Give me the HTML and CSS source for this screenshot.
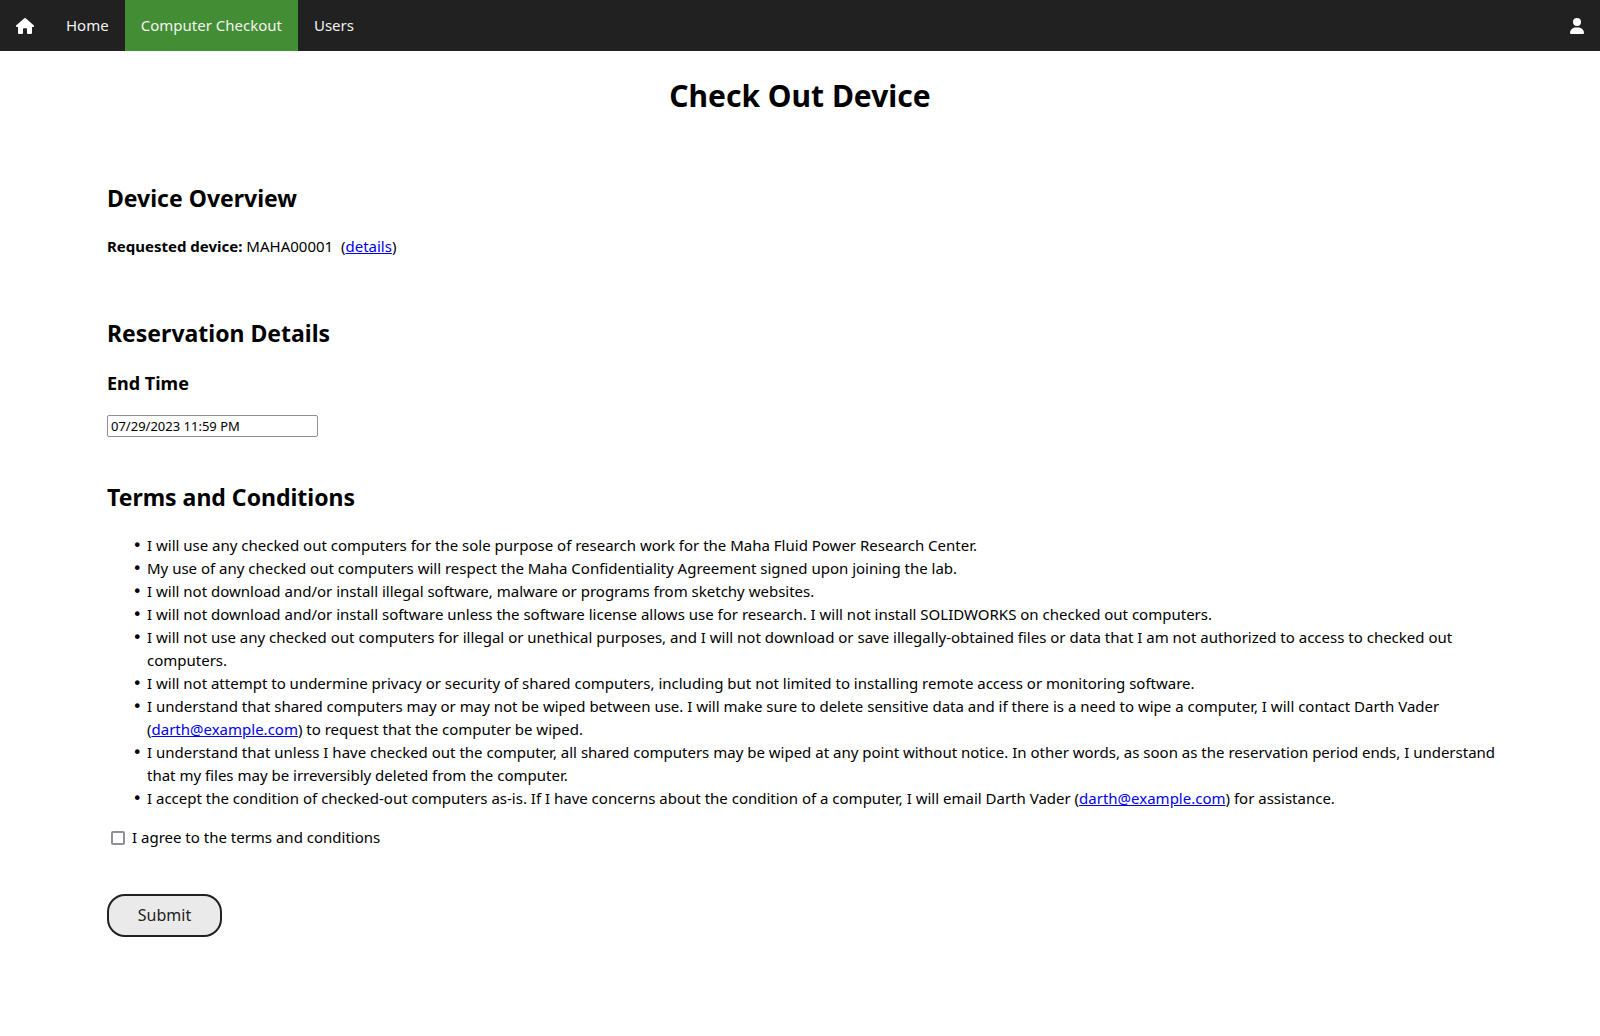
FILE: index.html
```html
<!DOCTYPE html>
<html lang="en">
<head>
  <meta charset="utf-8">
  <meta name="viewport" content="width=device-width, initial-scale=1">
  <title>Check Out Device</title>
  <link rel="stylesheet" href="styles.css">
</head>
<body>
  <nav class="navbar" aria-label="Main">
    <a class="nav-link" href="#" aria-label="Start page">
      <svg class="icon-home" viewBox="0 0 576 512" aria-hidden="true"><path d="M575.8 255.500c0 18-15 32.100-32 32.100h-32l.7 160.200c0 2.700-.2 5.400-.5 8.100V472c0 22.100-17.900 40-40 40H392c-22.100 0-40-17.900-40-40V360c0-17.700-14.300-32-32-32h-64c-17.700 0-32 14.300-32 32v112c0 22.100-17.900 40-40 40H104c-22.100 0-40-17.900-40-40V287.600H32c-18 0-32-14-32-32.100 0-9 3-17 10-24L266.400 8c7-7 15-8 22-8s15 2 21 7l255.400 224.500c8 7 12 15 11 24z"/></svg>
    </a>
    <a class="nav-link" href="#">Home</a>
    <a class="nav-link active" href="#" aria-current="page">Computer Checkout</a>
    <a class="nav-link" href="#">Users</a>
    <a class="nav-link account" href="#" aria-label="Account">
      <svg class="icon-user" viewBox="0 0 448 512" aria-hidden="true"><circle cx="224" cy="128" r="128"/><path d="M178.300 304C79.800 304 0 383.800 0 482.300 0 498.700 13.300 512 29.700 512h388.600c16.400 0 29.700-13.300 29.700-29.700C448 383.800 368.200 304 269.700 304z"/></svg>
    </a>
  </nav>

  <main class="page">
    <h1 class="page-title">Check Out Device</h1>

    <form class="checkout">
      <section class="overview">
        <h2 class="section-title">Device Overview</h2>
        <p class="text"><strong>Requested device:</strong> MAHA00001&nbsp; (<a href="#">details</a>)</p>
      </section>

      <section class="reservation">
        <h2 class="section-title">Reservation Details</h2>
        <h3 class="field-title"><label for="end-time">End Time</label></h3>
        <input class="end-time" id="end-time" type="text" value="07/29/2023 11:59 PM">
      </section>

      <section class="terms">
        <h2 class="section-title">Terms and Conditions</h2>
        <ul class="terms-list">
          <li>I will use any checked out computers for the sole purpose of research work for the Maha Fluid Power Research Center.</li>
          <li>My use of any checked out computers will respect the Maha Confidentiality Agreement signed upon joining the lab.</li>
          <li>I will not download and/or install illegal software, malware or programs from sketchy websites.</li>
          <li>I will not download and/or install software unless the software license allows use for research. I will not install SOLIDWORKS on checked out computers.</li>
          <li>I will not use any checked out computers for illegal or unethical purposes, and I will not download or save illegally-obtained files or data that I am not authorized to access to checked out computers.</li>
          <li>I will not attempt to undermine privacy or security of shared computers, including but not limited to installing remote access or monitoring software.</li>
          <li>I understand that shared computers may or may not be wiped between use. I will make sure to delete sensitive data and if there is a need to wipe a computer, I will contact Darth Vader (<a href="mailto:darth@example.com">darth@example.com</a>) to request that the computer be wiped.</li>
          <li>I understand that unless I have checked out the computer, all shared computers may be wiped at any point without notice. In other words, as soon as the reservation period ends, I understand that my files may be irreversibly deleted from the computer.</li>
          <li>I accept the condition of checked-out computers as-is. If I have concerns about the condition of a computer, I will email Darth Vader (<a href="mailto:darth@example.com">darth@example.com</a>) for assistance.</li>
        </ul>
        <div class="agree">
          <input class="agree-box" id="agree" type="checkbox">
          <label for="agree">I agree to the terms and conditions</label>
        </div>
      </section>

      <button class="submit" type="submit">Submit</button>
    </form>
  </main>
</body>
</html>
```
FILE: styles.css
```css
* {
  box-sizing: border-box;
}

body {
  margin: 0;
  background: #fff;
  color: #000;
  font: 15px/23px "Noto Sans", sans-serif;
}

a {
  color: #0000ee;
}

/* Navigation */
.navbar {
  display: flex;
  background: #212121;
}

.nav-link {
  display: flex;
  align-items: center;
  padding: 14px 16px;
  color: #f2f2f2;
  text-decoration: none;
}

.nav-link.active {
  background: #438d34;
}

.account {
  margin-left: auto;
}

.icon-home,
.icon-user {
  height: 16px;
  fill: #fff;
}

.icon-home {
  width: 18px;
}

.icon-user {
  width: 14px;
}

/* Page */
.page {
  padding: 23px 107px 96px;
}

h1,
h2,
h3,
p,
ul {
  margin: 0;
}

.page-title {
  margin-bottom: 64px;
  font-size: 30px;
  line-height: 44px;
  text-align: center;
}

.section-title {
  margin-bottom: 21px;
  font-size: 23px;
  line-height: 32px;
}

.overview {
  margin-bottom: 59px;
}

.reservation {
  margin-bottom: 44px;
}

.terms {
  margin-bottom: 45px;
}

.field-title {
  margin-bottom: 19px;
  font-size: 18px;
  line-height: 26px;
}

.end-time {
  display: block;
  width: 211px;
  height: 22px;
  padding: 0 3px;
  border: 1px solid #8f8f9d;
  border-radius: 2px;
  background: #fff;
  color: #000;
  font: 13px "Noto Sans", sans-serif;
}

.terms-list {
  margin: 0 -12px 16px 0;
  padding-left: 40px;
}

.terms-list li::marker {
  content: "•\a0";
  font-family: "DejaVu Sans", sans-serif;
  font-size: 16px;
}

.agree {
  display: flex;
  align-items: center;
  gap: 7px;
  padding-left: 4px;
}

.agree-box {
  width: 14px;
  height: 14px;
  margin: 0;
  appearance: none;
  border: 2px solid #8f8f9d;
  border-radius: 2px;
  background: #fff;
}

.agree-box:checked {
  background: #438d34;
}

.submit {
  display: block;
  min-width: 115px;
  height: 43px;
  padding: 0 28px 2px;
  border: 2px solid #212121;
  border-radius: 18px;
  background: #eaeaea;
  color: #212121;
  font: 16px "Noto Sans", sans-serif;
}
```
